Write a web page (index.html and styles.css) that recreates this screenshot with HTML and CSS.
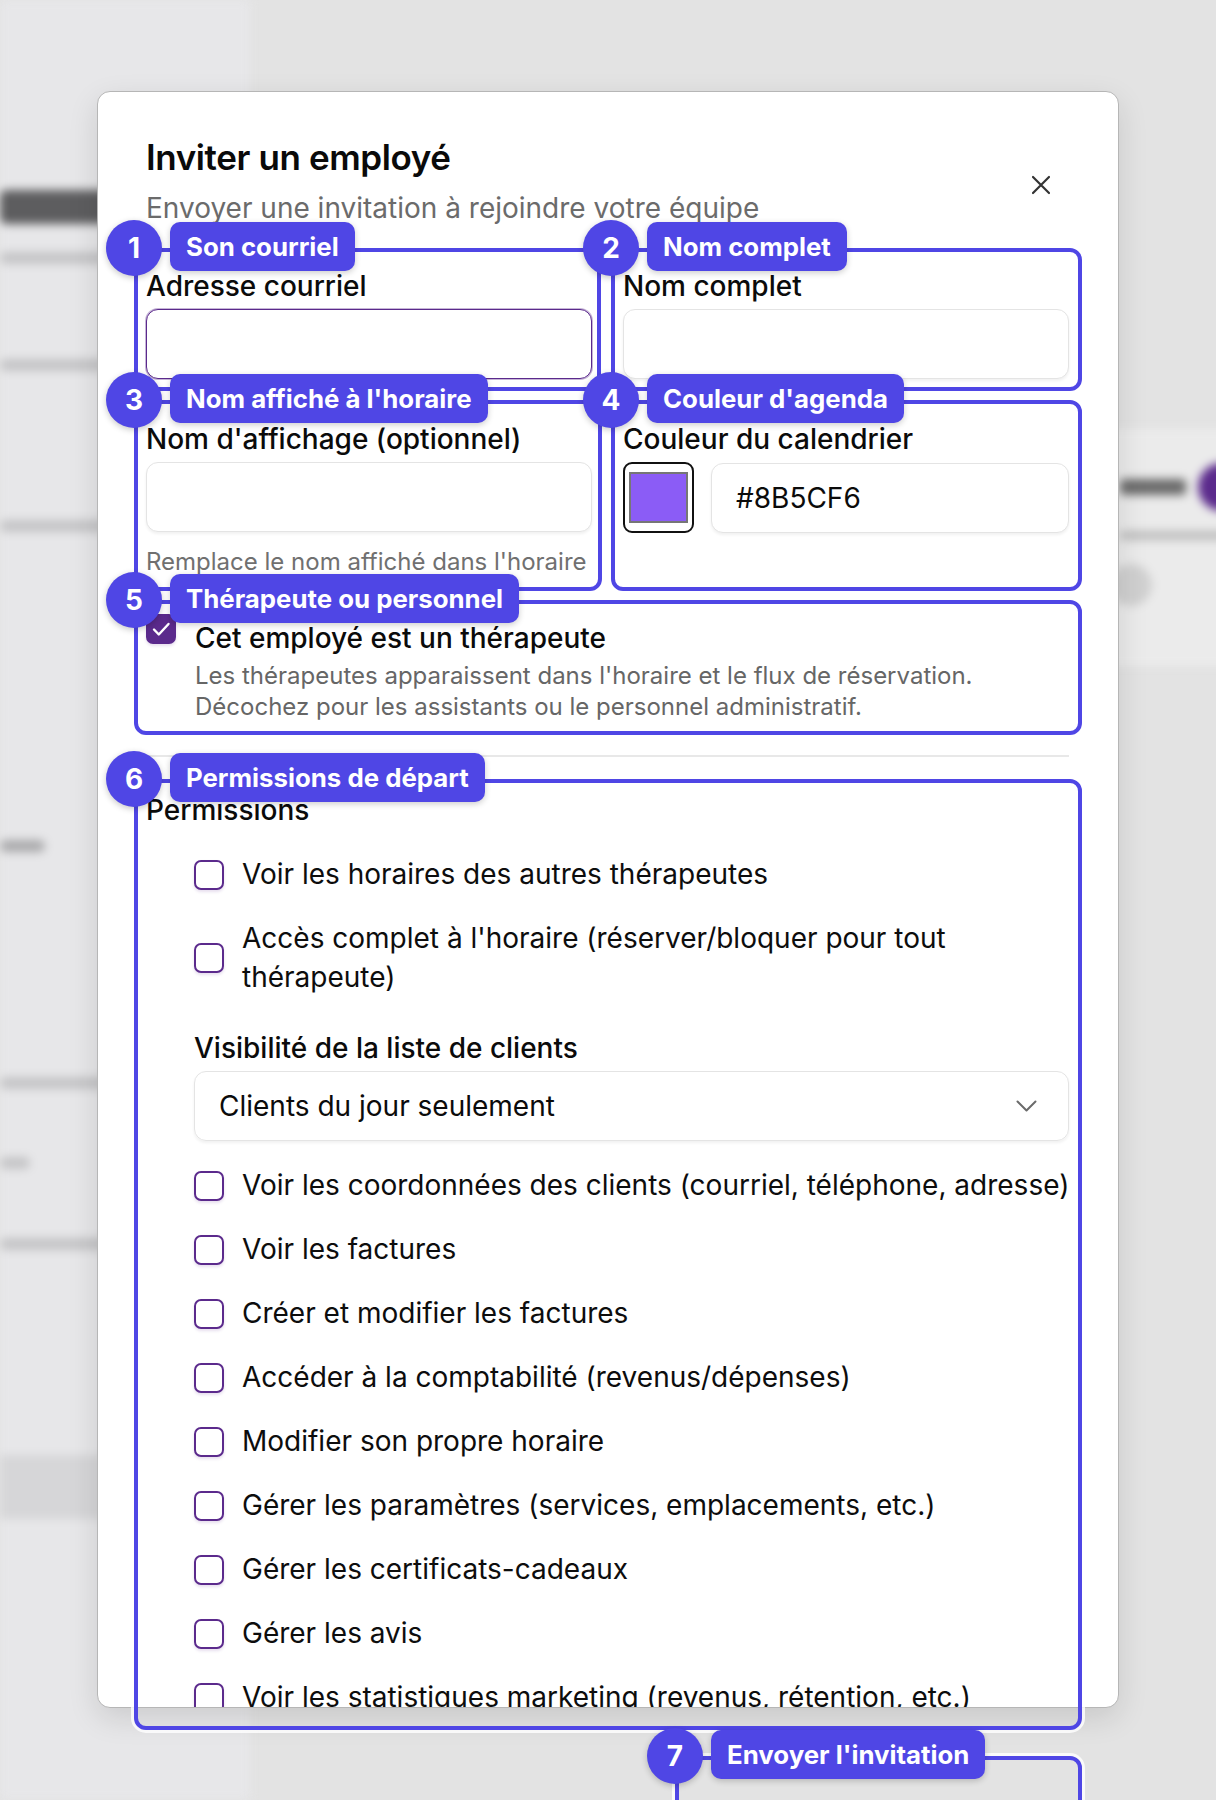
FILE: index.html
```html
<!DOCTYPE html>
<html lang="fr">
<head>
	<meta charset="UTF-8">
	<title>Inviter un employé</title>
	<link rel="stylesheet" href="styles.css">
</head>
<body>
	<!-- page behind the dialog, blurred -->
	<div class="page">
		<aside class="side">
			<div class="side-title"></div>
			<div class="bar b1"></div>
			<div class="bar b2"></div>
			<div class="bar b3"></div>
			<div class="bar b4 dark"></div>
			<div class="bar b5"></div>
			<div class="bar b6 short"></div>
			<div class="bar b7"></div>
			<div class="side-active"></div>
		</aside>
		<main class="main">
			<div class="bg-card">
				<div class="bg-row">
					<span class="bg-name"></span>
					<span class="bg-avatar"></span>
				</div>
				<div class="bg-row">
					<span class="bg-sub"></span>
				</div>
				<span class="bg-dot"></span>
			</div>
		</main>
	</div>

	<div class="overlay">
		<div class="modal">
			<button class="close" type="button" aria-label="Fermer">
				<svg width="20" height="20" viewBox="0 0 20 20"><path d="M2 2L18 18M18 2L2 18" stroke="#333" stroke-width="2.2" stroke-linecap="round"/></svg>
			</button>
			<h2 class="title">Inviter un employé</h2>
			<p class="subtitle">Envoyer une invitation à rejoindre votre équipe</p>

			<div class="form-grid">
				<div class="field">
					<label>Adresse courriel</label>
					<input class="input focus" type="email">
				</div>
				<div class="field">
					<label>Nom complet</label>
					<input class="input" type="text">
				</div>
				<div class="field">
					<label>Nom d'affichage (optionnel)</label>
					<input class="input" type="text">
					<p class="help">Remplace le nom affiché dans l'horaire</p>
				</div>
				<div class="field">
					<label>Couleur du calendrier</label>
					<div class="color-row">
						<span class="swatch"><span class="swatch-fill"></span></span>
						<input class="input hex" type="text" value="#8B5CF6">
					</div>
				</div>
			</div>

			<div class="therapist">
				<span class="check on">
					<svg width="30" height="30" viewBox="0 0 30 30"><path d="M8 15.5L12.8 20.5L22.5 10" fill="none" stroke="#fff" stroke-width="2.4" stroke-linecap="round" stroke-linejoin="round"/></svg>
				</span>
				<div class="therapist-text">
					<div class="therapist-label">Cet employé est un thérapeute</div>
					<p class="therapist-desc">Les thérapeutes apparaissent dans l'horaire et le flux de réservation.<br>Décochez pour les assistants ou le personnel administratif.</p>
				</div>
			</div>

			<hr class="sep">

			<div class="perms">
				<div class="perms-title">Permissions</div>
				<div class="perm-list">
					<div class="perm"><span class="check"></span><span>Voir les horaires des autres thérapeutes</span></div>
					<div class="perm"><span class="check"></span><span>Accès complet à l'horaire (réserver/bloquer pour tout<br>thérapeute)</span></div>
					<div class="visibility">
						<div class="visibility-label">Visibilité de la liste de clients</div>
						<div class="select">
							<span>Clients du jour seulement</span>
							<svg width="21" height="13" viewBox="0 0 21 13"><path d="M1.5 1.5L10.5 10.5L19.5 1.5" fill="none" stroke="#6b6b6b" stroke-width="2" stroke-linecap="round" stroke-linejoin="round"/></svg>
						</div>
					</div>
					<div class="perm"><span class="check"></span><span>Voir les coordonnées des clients (courriel, téléphone, adresse)</span></div>
					<div class="perm"><span class="check"></span><span>Voir les factures</span></div>
					<div class="perm"><span class="check"></span><span>Créer et modifier les factures</span></div>
					<div class="perm"><span class="check"></span><span>Accéder à la comptabilité (revenus/dépenses)</span></div>
					<div class="perm"><span class="check"></span><span>Modifier son propre horaire</span></div>
					<div class="perm"><span class="check"></span><span>Gérer les paramètres (services, emplacements, etc.)</span></div>
					<div class="perm"><span class="check"></span><span>Gérer les certificats-cadeaux</span></div>
					<div class="perm"><span class="check"></span><span>Gérer les avis</span></div>
					<div class="perm"><span class="check"></span><span>Voir les statistiques marketing (revenus, rétention, etc.)</span></div>
				</div>
			</div>
		</div>
	</div>

	<!-- numbered callouts drawn over the dialog -->
	<div class="notes">
		<div class="note n1"><span class="note-num">1</span><span class="note-tag">Son courriel</span></div>
		<div class="note n2"><span class="note-num">2</span><span class="note-tag">Nom complet</span></div>
		<div class="note n3"><span class="note-num">3</span><span class="note-tag">Nom affiché à l'horaire</span></div>
		<div class="note n4"><span class="note-num">4</span><span class="note-tag">Couleur d'agenda</span></div>
		<div class="note n5"><span class="note-num">5</span><span class="note-tag">Thérapeute ou personnel</span></div>
		<div class="note n6"><span class="note-num">6</span><span class="note-tag">Permissions de départ</span></div>
		<div class="note n7"><span class="note-num">7</span><span class="note-tag">Envoyer l'invitation</span></div>
	</div>
</body>
</html>
```

FILE: styles.css
```css
*{box-sizing:border-box;margin:0;padding:0;}
body{
	position:relative;
	width:1216px;
	height:1800px;
	overflow:hidden;
	background:#e3e3e3;
	font-family:Inter,"Noto Sans",sans-serif;
	color:#0b0b0b;
}

/* blurred page behind */
.page{
	display:flex;
	height:1800px;
	filter:blur(5px);
}
.side{
	width:250px;
	padding-top:190px;
	background:#e7e7e9;
}
.side-title{width:230px;height:34px;border-radius:6px;background:#5d5d5f;}
.bar{height:12px;width:220px;border-radius:6px;background:#c4c4c6;}
.bar.dark{background:#a9a9ab;width:45px;}
.bar.short{width:30px;}
.b1{margin-top:28px;}
.b2{margin-top:95px;}
.b3{margin-top:149px;}
.b4{margin-top:308px;}
.b5{margin-top:225px;}
.b6{margin-top:68px;}
.b7{margin-top:69px;}
.side-active{margin-top:205px;height:64px;background:#d6d6d8;}
.main{
	flex:1;
	padding-top:429px;
	display:flex;
	justify-content:flex-end;
}
.bg-card{
	width:330px;
	height:237px;
	margin-right:-40px;
	padding:34px 10px 0 20px;
	border-radius:12px;
	background:#ebebeb;
}
.bg-row{display:flex;justify-content:flex-end;align-items:center;gap:12px;}
.bg-name{width:66px;height:16px;border-radius:4px;background:#6a6a6a;}
.bg-avatar{width:48px;height:48px;border-radius:50%;background:#5b2a8c;}
.bg-sub{margin-top:20px;width:126px;height:9px;border-radius:4px;background:#bdbdbd;}
.bg-dot{display:block;margin:24px 0 0 164px;width:42px;height:42px;border-radius:50%;background:#d0d0d0;}

/* dialog */
.overlay{
	position:absolute;
	top:0;left:0;right:0;bottom:0;
	display:flex;
	justify-content:center;
	align-items:flex-start;
	padding-top:91px;
}
.modal{
	position:relative;
	width:1022px;
	height:1617px;
	padding:45px 49px 0 48px;
	overflow:hidden;
	background:#fff;
	border:1px solid #b6b6b6;
	border-radius:13px;
	box-shadow:0 10px 30px rgba(0,0,0,.12);
}
.close{
	position:absolute;
	top:83px;
	right:67px;
	width:20px;
	height:20px;
	border:none;
	background:none;
}
.close svg{display:block;}
.title{
	font-size:35px;
	line-height:40px;
	font-weight:600;
	letter-spacing:-0.4px;
	color:#0a0a0a;
}
.subtitle{
	margin-top:15px;
	font-size:28px;
	line-height:32px;
	color:#6b6b6b;
}

.form-grid{
	display:grid;
	grid-template-columns:1fr 1fr;
	column-gap:31px;
	row-gap:42px;
	margin-top:44px;
	align-items:start;
}
.field label{
	display:block;
	font-size:28px;
	line-height:36px;
	font-weight:500;
	margin-bottom:5px;
}
.input{
	display:block;
	width:100%;
	height:70px;
	padding:0 24px;
	border:1px solid #e4e4e4;
	border-radius:12px;
	background:#fff;
	box-shadow:0 2px 3px rgba(0,0,0,.06);
	font-family:inherit;
	font-size:28px;
	color:#0b0b0b;
	outline:none;
}
.input.focus{
	border-color:#5b2a8c;
	box-shadow:0 0 0 1px rgba(91,42,140,.35);
}
.help{
	margin-top:16px;
	font-size:24px;
	line-height:28px;
	color:#707070;
}
.color-row{display:flex;gap:17px;align-items:center;}
.color-row .hex{flex:1;}
.swatch{
	flex:none;
	width:71px;
	height:71px;
	padding:8px 4px;
	border:2px solid #111;
	border-radius:9px;
}
.swatch-fill{
	display:block;
	width:100%;
	height:100%;
	background:#8b5cf6;
	border:2px solid #767676;
}

.check{
	flex:none;
	display:block;
	width:30px;
	height:30px;
	border:2px solid #5b2a8c;
	border-radius:7px;
	background:#fff;
	box-shadow:0 2px 3px rgba(91,42,140,.15);
}
.check.on{background:#5b2a8c;border-color:#5b2a8c;}
.check.on svg{display:block;margin:-2px;}

.therapist{
	display:flex;
	align-items:flex-start;
	gap:19px;
	margin-top:38px;
}
.therapist-text{padding-top:6px;}
.therapist-label{
	font-size:28px;
	line-height:36px;
	font-weight:500;
}
.therapist-desc{
	margin-top:4px;
	font-size:24px;
	line-height:31px;
	color:#666;
}

.sep{
	margin-top:33px;
	border:none;
	height:2px;
	background:#e8e8e8;
}

.perms-title{
	margin-top:35px;
	font-size:28px;
	line-height:36px;
	font-weight:500;
}
.perm-list{
	display:flex;
	flex-direction:column;
	gap:25px;
	margin-top:27px;
	padding-left:48px;
}
.perm{
	display:flex;
	align-items:center;
	gap:18px;
	font-size:28px;
	line-height:39px;
	white-space:nowrap;
	color:#0d0d0d;
}
.visibility{margin-top:8px;}
.visibility-label{
	font-size:28px;
	line-height:36px;
	font-weight:500;
	margin-bottom:5px;
}
.select{
	display:flex;
	align-items:center;
	justify-content:space-between;
	height:70px;
	padding:0 31px 0 24px;
	border:1px solid #e4e4e4;
	border-radius:12px;
	box-shadow:0 2px 3px rgba(0,0,0,.06);
	font-size:28px;
}

/* callouts */
.notes{
	position:absolute;
	top:0;left:0;right:0;bottom:0;
	pointer-events:none;
}
.note{
	position:absolute;
	border:4px solid #4f46e5;
	border-radius:12px;
	box-shadow:0 0 0 3px rgba(255,255,255,.8);
}
.note-num{
	position:absolute;
	left:-32px;
	top:-32px;
	width:56px;
	height:56px;
	border-radius:50%;
	background:#4f46e5;
	color:#fff;
	font-size:28px;
	line-height:56px;
	font-weight:700;
	text-align:center;
	box-shadow:0 2px 6px rgba(0,0,0,.22);
}
.note-tag{
	position:absolute;
	left:32px;
	top:-30px;
	height:49px;
	padding:0 16px;
	border-radius:10px;
	background:#4f46e5;
	color:#fff;
	font-size:25.8px;
	line-height:49px;
	font-weight:700;
	white-space:nowrap;
	box-shadow:0 2px 6px rgba(0,0,0,.2);
}
.n1{left:134px;top:248px;width:467px;height:143px;}
.n2{left:611px;top:248px;width:471px;height:143px;}
.n3{left:134px;top:400px;width:468px;height:191px;}
.n4{left:611px;top:400px;width:471px;height:191px;}
.n5{left:134px;top:600px;width:948px;height:135px;}
.n6{left:134px;top:779px;width:948px;height:951px;}
.n7{left:675px;top:1756px;width:407px;height:200px;}
```
